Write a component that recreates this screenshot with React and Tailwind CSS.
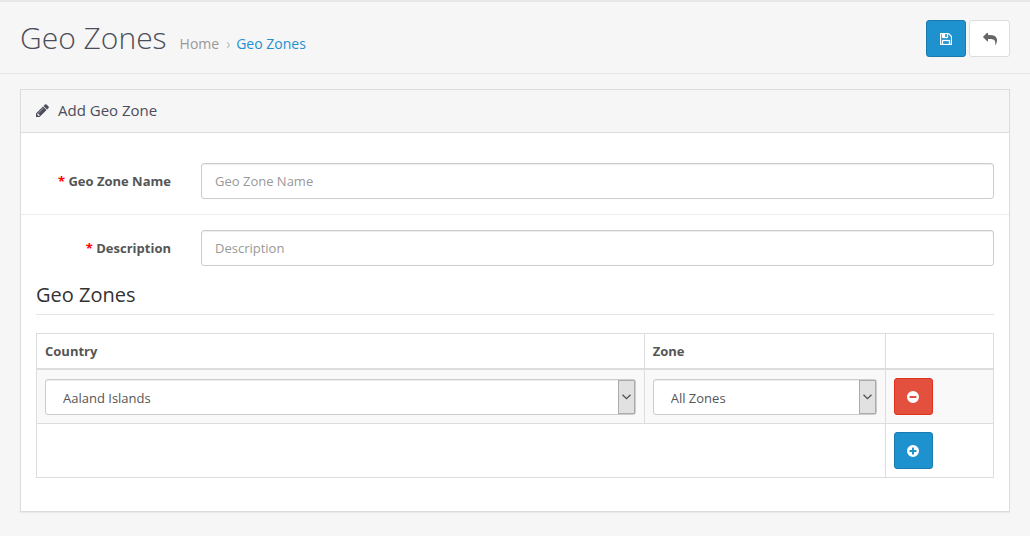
import React from 'react';

const Icon = ({ box, className, children }) => (
  <svg viewBox={box} className={className} fill="currentColor" aria-hidden="true">
    {children}
  </svg>
);

const PencilIcon = () => (
  <Icon box="128 128 1536 1536" className="size-[13px]">
    <path d="M491 1536l91-91-235-235-91 91v107h128v128h107zM1014 608q0-22-22-22-10 0-17 7l-542 542q-7 7-7 17 0 22 22 22 10 0 17-7l542-542q7-7 7-17zM960 416l416 416-832 832h-416v-416zM1643 512q0 53-37 90l-166 166-416-416 166-165q36-38 90-38 53 0 91 38l235 234q37 39 37 91z" />
  </Icon>
);

const SaveIcon = () => (
  <Icon box="0 128 1536 1536" className="size-3">
    <path stroke="currentColor" strokeWidth="40" d="M384 1536h768v-384h-768v384zM1280 1536h128v-896q0-14-10-38.5t-20-34.5l-281-281q-10-10-34-20t-39-10v416q0 40-28 68t-68 28h-576q-40 0-68-28t-28-68v-416h-128v1280h128v-416q0-40 28-68t68-28h832q40 0 68 28t28 68v416zM896 608v-320q0-13-9.5-22.5t-22.5-9.5h-192q-13 0-22.5 9.5t-9.5 22.5v320q0 13 9.5 22.5t22.5 9.5h192q13 0 22.5-9.5t9.5-22.5zM1536 640v928q0 40-28 68t-68 28h-1344q-40 0-68-28t-28-68v-1344q0-40 28-68t68-28h928q40 0 88 20t76 48l280 280q28 28 48 76t20 88z" />
  </Icon>
);

const ReplyIcon = () => (
  <Icon box="0 128 1792 1536" className="h-3 w-3.5">
    <path d="M1792 1120q0 166-127 451-3 7-10.5 24t-13.5 30-13 22q-12 17-28 17-15 0-23.5-10t-8.5-25q0-9 2.5-26.5t2.5-23.5q5-68 5-123 0-101-17.5-181t-48.5-138.5-80-101-105.5-69.5-133-42.5-154-21.5-175.5-6h-224v256q0 26-19 45t-45 19-45-19l-512-512q-19-19-19-45t19-45l512-512q19-19 45-19t45 19 19 45v256h224q713 0 875 403 53 134 53 333z" />
  </Icon>
);

const MinusIcon = () => (
  <Icon box="0 0 1536 1536" className="size-3">
    <path fillRule="evenodd" d="M768 0a768 768 0 1 1 0 1536a768 768 0 1 1 0-1536zM384 640q-64 0-64 64v128q0 64 64 64h768q64 0 64-64v-128q0-64-64-64z" />
  </Icon>
);

const PlusIcon = () => (
  <Icon box="0 0 1536 1536" className="size-3">
    <path fillRule="evenodd" d="M768 0a768 768 0 1 1 0 1536a768 768 0 1 1 0-1536zM704 320q-64 0-64 64v256h-256q-64 0-64 64v128q0 64 64 64h256v256q0 64 64 64h128q64 0 64-64v-256h256q64 0 64-64v-128q0-64-64-64h-256v-256q0-64-64-64z" />
  </Icon>
);

const BUTTON = 'flex h-[37px] items-center justify-center rounded-[3px] border';

function Field({ id, label }) {
  return (
    <div className="flex items-center py-[15px]">
      <label htmlFor={id} className="w-[165px] shrink-0 pr-[15px] text-right font-bold">
        <span className="text-[#ff0000]">*</span> {label}
      </label>
      <div className="grow px-[15px]">
        <input
          id={id}
          type="text"
          placeholder={label}
          className="block h-9 w-full rounded-[3px] border border-[#cccccc] bg-white px-[13px] shadow-[inset_0_1px_1px_rgba(0,0,0,0.075)] placeholder:text-[#999999]"
        />
      </div>
    </div>
  );
}

function Select({ label, option }) {
  return (
    <div className="relative">
      <select
        aria-label={label}
        className="block h-9 w-full appearance-none rounded-[3px] border border-[#cccccc] bg-white pt-0.5 pr-6 pl-[17px] shadow-[inset_0_1px_1px_rgba(0,0,0,0.075)]"
      >
        <option>{option}</option>
      </select>
      <span className="pointer-events-none absolute inset-y-px right-px flex w-[17px] items-center justify-center border border-[#ababab] bg-[#e1e1e1]">
        <svg viewBox="0 0 9 6" className="h-1.5 w-[9px]" fill="none" stroke="#505050" strokeWidth="1.3" aria-hidden="true">
          <path d="M0.5 0.7l4 4 4-4" />
        </svg>
      </span>
    </div>
  );
}

const CELL = 'border border-[#dddddd] p-2';

export default function App() {
  return (
    <div className="min-h-screen border-t-2 border-[#e7e7e7] bg-[#f6f6f6] font-['Open_Sans','Noto_Sans',sans-serif] text-[13px] leading-[18px] text-[#555555]">
      <header className="flex items-start justify-between border-b border-[#e7e7e7] px-5 pt-[18px] pb-4">
        <div className="flex items-baseline">
          <h1 className="text-[30px] leading-[35px] font-light text-[#4c4d5a]">Geo Zones</h1>
          <nav aria-label="Breadcrumb" className="ml-[13px] text-sm">
            <ol className="flex items-baseline">
              <li><a href="#home" className="text-[#999999]">Home</a></li>
              <li aria-hidden="true" className="w-[17px] pl-[7px] text-[#bbbbbb]">›</li>
              <li><a href="#geo-zones" className="text-[#1e91cf]">Geo Zones</a></li>
            </ol>
          </nav>
        </div>
        <div className="flex gap-[3px]">
          <button type="button" aria-label="Save" className={`${BUTTON} w-10 border-[#197bb0] bg-[#1e91cf] text-white`}>
            <SaveIcon />
          </button>
          <button type="button" aria-label="Cancel" className={`${BUTTON} w-[41px] border-[#dddddd] bg-white text-[#666666]`}>
            <ReplyIcon />
          </button>
        </div>
      </header>

      <main className="px-5 py-[15px]">
        <section className="border border-[#dcdcdc] bg-white shadow-[0_1px_1px_rgba(0,0,0,0.05)]">
          <div className="flex items-center gap-[9px] border-b border-[#dcdcdc] bg-[#f6f6f6] px-[15px] pt-[11px] pb-[13px] text-[#4c4d5a]">
            <PencilIcon />
            <h2 className="text-[15px] leading-[18px]">Add Geo Zone</h2>
          </div>

          <form className="pt-[15px] pb-[33px]">
            <Field id="geo-zone-name" label="Geo Zone Name" />
            <div className="border-t border-[#ededed]">
              <Field id="description" label="Description" />
            </div>

            <fieldset className="px-[15px]">
              <legend className="mb-[18px] block w-full border-b border-[#e5e5e5] pb-[6px] text-[20px] leading-[27px] text-[#333333]">
                Geo Zones
              </legend>
              <table className="w-full table-fixed border-collapse">
                <colgroup>
                  <col />
                  <col className="w-[25.2%]" />
                  <col className="w-[11.3%]" />
                </colgroup>
                <thead>
                  <tr>
                    <th className={`${CELL} border-b-2 text-left`}>Country</th>
                    <th className={`${CELL} border-b-2 text-left`}>Zone</th>
                    <td className={`${CELL} border-b-2`} />
                  </tr>
                </thead>
                <tbody>
                  <tr className="bg-[#f9f9f9]">
                    <td className={CELL}><Select label="Country" option="Aaland Islands" /></td>
                    <td className={CELL}><Select label="Zone" option="All Zones" /></td>
                    <td className={CELL}>
                      <button type="button" aria-label="Remove" className={`${BUTTON} w-[39px] border-[#e0301e] bg-[#e4503e] text-white`}>
                        <MinusIcon />
                      </button>
                    </td>
                  </tr>
                </tbody>
                <tfoot>
                  <tr>
                    <td colSpan={2} className={CELL} />
                    <td className={CELL}>
                      <button type="button" aria-label="Add Geo Zone" className={`${BUTTON} w-[39px] border-[#197bb0] bg-[#1e91cf] text-white`}>
                        <PlusIcon />
                      </button>
                    </td>
                  </tr>
                </tfoot>
              </table>
            </fieldset>
          </form>
        </section>
      </main>
    </div>
  );
}
